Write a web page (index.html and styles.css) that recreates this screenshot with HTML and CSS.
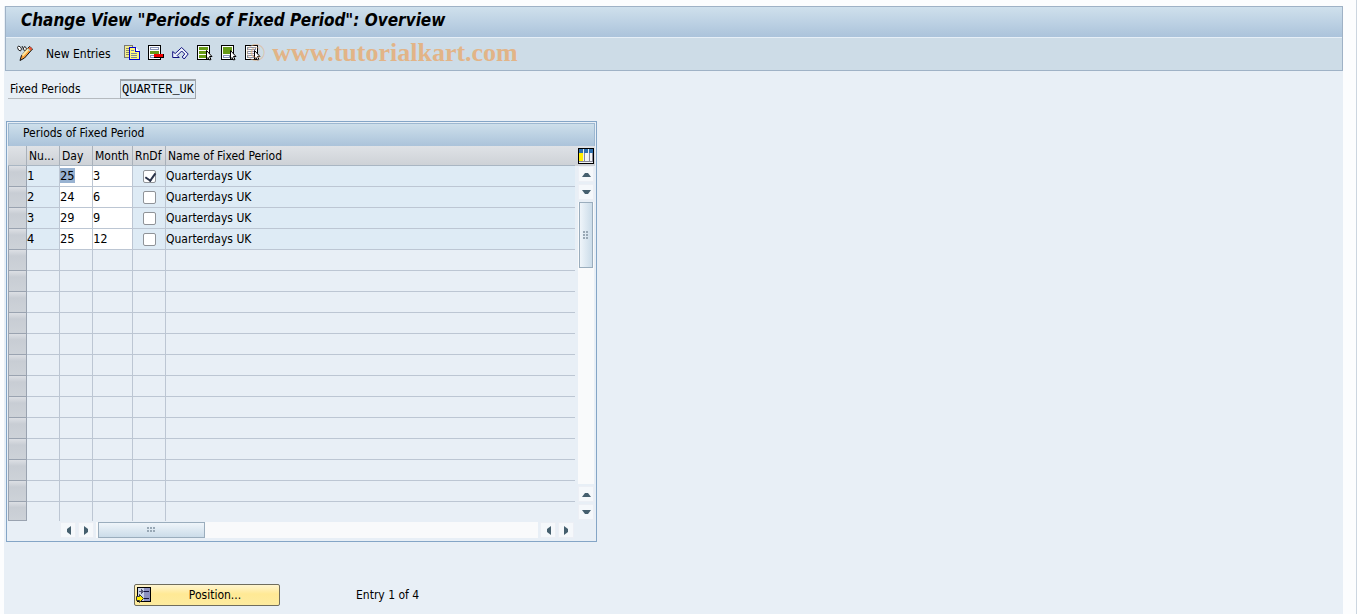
FILE: index.html
```html
<!DOCTYPE html>
<html lang="en">
<head>
<meta charset="utf-8">
<title>Change View "Periods of Fixed Period": Overview</title>
<link rel="stylesheet" href="styles.css">
</head>
<body>
<main class="screen">
  <header class="head">
    <h1 class="title">Change View "Periods of Fixed Period": Overview</h1>
    <div class="toolbar">
      <button class="tool" aria-label="Display/Change">
        <svg width="18" height="18" viewBox="0 0 18 18"><path d="M1.500 3.500l1-1.500 2 1 1 2-1 2-2-1zM6 2l1.500 3M7 5.500l1.500-3 1.500 1 .5 2-1.500 1z" fill="#fff" stroke="#222"/><path d="M13.500 2.500l3 2.500-8 9-4.500 2.500 1.500-5z" fill="#f9a13c" stroke="#111"/><path d="M6.500 11.500l6-6.500" stroke="#ffe9a0" stroke-width="2"/><path d="M13.500 3.500l2 2" stroke="#e8503a" stroke-width="2"/><path d="M12 5l2 2" stroke="#9ccaf0"/></svg>
      </button>
      <button class="tool tool-text">New Entries</button>
      <button class="tool" aria-label="Copy As">
        <svg width="16" height="16" viewBox="0 0 16 16" shape-rendering="crispEdges"><path d="M.5.5h8v12h-8z" fill="#f4ed8e" stroke="#777"/><path d="M2 3.500h3M2 5.500h3M2 7.500h3M2 9.500h3" stroke="#8a8a60"/><path d="M5.500 2.500h6l4 4v8h-10z" fill="#fff67c" stroke="#0000d0"/><path d="M11.500 2.500v4h4" fill="#fff" stroke="#0000d0"/><path d="M7 5.500h3M7 8.500h6M7 10.500h6M7 12.500h6" stroke="#7d88a0"/></svg>
      </button>
      <button class="tool" aria-label="Delete">
        <svg width="16" height="16" viewBox="0 0 16 16" shape-rendering="crispEdges"><path d="M.5.500h12v14h-12z" fill="#fff" stroke="#000"/><path d="M2.500 2.500h8v2h-8zM2.500 10.500h4v2h-4z" fill="#fff" stroke="#8793b8"/><path d="M2 6h9v3H2z" fill="#679b17"/><path d="M6 9h10v4H6z" fill="#000"/><path d="M6 9h9v3H6z" fill="#f00000"/></svg>
      </button>
      <button class="tool" aria-label="Undo Change">
        <svg width="17" height="16" viewBox="0 0 17 16"><path d="M.7 6.500v6h6.500l-2-2 4.500-4.500 3 3-2.500 3 2 2 4-5-6.500-6.500-6.500 6z" fill="#eef3fb" stroke="#111180"/></svg>
      </button>
      <button class="tool" aria-label="Select All">
        <svg width="16" height="16" viewBox="0 0 16 16" shape-rendering="crispEdges"><path d="M.5.500h12v14h-12z" fill="#fff" stroke="#000"/><path d="M2 2h9v3H2zM2 6h9v3H2zM2 10h8v3H2z" fill="#679b17"/><path d="M9.500 5.500l5.500 6h-2.500l1.500 3-1.500.500-1.500-2.500-1.500 1.500z" fill="#fff" stroke="#000" shape-rendering="auto"/></svg>
      </button>
      <button class="tool" aria-label="Select Block">
        <svg width="16" height="16" viewBox="0 0 16 16" shape-rendering="crispEdges"><path d="M.5.500h12v14h-12z" fill="#fff" stroke="#000"/><path d="M2 2h9v7H2z" fill="#679b17"/><path d="M2.500 10.500h6v2h-6z" fill="#fff" stroke="#8793b8"/><path d="M9.500 5.500l5.500 6h-2.500l1.500 3-1.500.500-1.500-2.500-1.500 1.500z" fill="#fff" stroke="#000" shape-rendering="auto"/></svg>
      </button>
      <button class="tool" aria-label="Deselect All">
        <svg width="16" height="16" viewBox="0 0 16 16" shape-rendering="crispEdges"><path d="M.5.500h12v14h-12z" fill="#fff" stroke="#000"/><path d="M2.500 2.500h8v2h-8zM2.500 6.500h8v2h-8zM2.500 10.500h6v2h-6z" fill="#fff" stroke="#8793a8"/><path d="M9.500 5.500l5.500 6h-2.500l1.500 3-1.500.500-1.500-2.500-1.500 1.500z" fill="#fff" stroke="#000" shape-rendering="auto"/></svg>
      </button>
    </div>
    <span class="watermark"><span class="mark">©</span> www.tutorialkart.com</span>
  </header>

  <div class="field">
    <label class="field-label" for="fixed">Fixed Periods</label>
    <input class="field-value" id="fixed" value="QUARTER_UK" readonly>
  </div>

  <section class="panel">
    <h2 class="panel-title">Periods of Fixed Period</h2>
    <div class="grid">
      <table class="periods">
        <colgroup><col class="c-sel"><col class="c-num"><col class="c-day"><col class="c-month"><col class="c-flag"><col></colgroup>
        <thead>
          <tr><th></th><th>Nu...</th><th>Day</th><th>Month</th><th>RnDf</th><th>Name of Fixed Period</th></tr>
        </thead>
        <tbody>
          <tr class="filled"><td><button class="pick" aria-label="Select row 1"></button></td><td class="num">1</td><td><input class="cell selected" aria-label="Day 1" value="25"></td><td><input class="cell" aria-label="Month 1" value="3"></td><td><input type="checkbox" class="flag" aria-label="RnDf 1" checked></td><td>Quarterdays UK</td></tr>
          <tr class="filled"><td><button class="pick" aria-label="Select row 2"></button></td><td class="num">2</td><td><input class="cell" aria-label="Day 2" value="24"></td><td><input class="cell" aria-label="Month 2" value="6"></td><td><input type="checkbox" class="flag" aria-label="RnDf 2"></td><td>Quarterdays UK</td></tr>
          <tr class="filled"><td><button class="pick" aria-label="Select row 3"></button></td><td class="num">3</td><td><input class="cell" aria-label="Day 3" value="29"></td><td><input class="cell" aria-label="Month 3" value="9"></td><td><input type="checkbox" class="flag" aria-label="RnDf 3"></td><td>Quarterdays UK</td></tr>
          <tr class="filled"><td><button class="pick" aria-label="Select row 4"></button></td><td class="num">4</td><td><input class="cell" aria-label="Day 4" value="25"></td><td><input class="cell" aria-label="Month 4" value="12"></td><td><input type="checkbox" class="flag" aria-label="RnDf 4"></td><td>Quarterdays UK</td></tr>
          <tr><td><button class="pick" aria-label="Select row 5"></button></td><td></td><td></td><td></td><td></td><td></td></tr>
          <tr><td><button class="pick" aria-label="Select row 6"></button></td><td></td><td></td><td></td><td></td><td></td></tr>
          <tr><td><button class="pick" aria-label="Select row 7"></button></td><td></td><td></td><td></td><td></td><td></td></tr>
          <tr><td><button class="pick" aria-label="Select row 8"></button></td><td></td><td></td><td></td><td></td><td></td></tr>
          <tr><td><button class="pick" aria-label="Select row 9"></button></td><td></td><td></td><td></td><td></td><td></td></tr>
          <tr><td><button class="pick" aria-label="Select row 10"></button></td><td></td><td></td><td></td><td></td><td></td></tr>
          <tr><td><button class="pick" aria-label="Select row 11"></button></td><td></td><td></td><td></td><td></td><td></td></tr>
          <tr><td><button class="pick" aria-label="Select row 12"></button></td><td></td><td></td><td></td><td></td><td></td></tr>
          <tr><td><button class="pick" aria-label="Select row 13"></button></td><td></td><td></td><td></td><td></td><td></td></tr>
          <tr><td><button class="pick" aria-label="Select row 14"></button></td><td></td><td></td><td></td><td></td><td></td></tr>
          <tr><td><button class="pick" aria-label="Select row 15"></button></td><td></td><td></td><td></td><td></td><td></td></tr>
          <tr><td><button class="pick" aria-label="Select row 16"></button></td><td></td><td></td><td></td><td></td><td></td></tr>
          <tr class="last"><td><button class="pick" aria-label="Select row 17"></button></td><td></td><td></td><td></td><td></td><td></td></tr>
        </tbody>
      </table>
      <div class="side">
        <button class="config" aria-label="Table settings">
          <svg width="16" height="16" viewBox="0 0 16 16" shape-rendering="crispEdges"><path d="M0 0h16v16H0z" fill="#000"/><path d="M1 1h14v14H1z" fill="#f2f4f6"/><path d="M1 1h14v4H1z" fill="#2d6fae"/><path d="M1 5h4v8H1z" fill="#ffee00"/><path d="M5.500 1v13M10.500 1v13" stroke="#e8eef4"/><path d="M6.500 5v9M11.500 5v9M14.500 5v9M1 13.500h13" stroke="#889"/></svg>
        </button>
        <button class="arrow" aria-label="Scroll up"><svg width="9" height="5" viewBox="0 0 9 5"><path d="M0 5h9L6 1H3z" fill="#455f6e"/></svg></button>
        <button class="arrow" aria-label="Scroll down"><svg width="9" height="5" viewBox="0 0 9 5"><path d="M0 0h9L6 4H3z" fill="#455f6e"/></svg></button>
        <div class="track track-v"><div class="thumb thumb-v"><i class="grip grip-v"></i></div></div>
        <button class="arrow" aria-label="Page up"><svg width="9" height="5" viewBox="0 0 9 5"><path d="M0 5h9L6 1H3z" fill="#455f6e"/></svg></button>
        <button class="arrow" aria-label="Page down"><svg width="9" height="5" viewBox="0 0 9 5"><path d="M0 0h9L6 4H3z" fill="#455f6e"/></svg></button>
      </div>
    </div>
    <div class="bottom">
      <button class="arrow" aria-label="Scroll left"><svg width="5" height="9" viewBox="0 0 5 9"><path d="M5 0v9L1 6V3z" fill="#455f6e"/></svg></button>
      <button class="arrow" aria-label="Scroll right"><svg width="5" height="9" viewBox="0 0 5 9"><path d="M0 0v9l4-3V3z" fill="#455f6e"/></svg></button>
      <div class="track track-h"><div class="thumb thumb-h"><i class="grip grip-h"></i></div></div>
      <button class="arrow" aria-label="Page left"><svg width="5" height="9" viewBox="0 0 5 9"><path d="M5 0v9L1 6V3z" fill="#455f6e"/></svg></button>
      <button class="arrow" aria-label="Page right"><svg width="5" height="9" viewBox="0 0 5 9"><path d="M0 0v9l4-3V3z" fill="#455f6e"/></svg></button>
    </div>
  </section>

  <footer class="foot">
    <button class="position">
      <svg width="16" height="16" viewBox="0 0 16 16" shape-rendering="crispEdges"><path d="M1.500.5h13v14h-13z" fill="#c9d3e8" stroke="#000"/><path d="M8 1h6v13H8z" fill="#8c90c0"/><path d="M8 4h5v1H8zM8 11h5v1H8z" fill="#15153c"/><path d="M3 4.500h4M5 2.500l2 2-2 2" fill="none" stroke="#557"/><path d="M.5 9.500h3v-2l4 4-4 4v-2h-3z" fill="#ffee00" stroke="#333" shape-rendering="auto"/></svg>
      <span class="position-text">Position...</span>
    </button>
    <span>Entry 1 of 4</span>
  </footer>
</main>
</body>
</html>
```
FILE: styles.css
```css
* { box-sizing: border-box; }
html { height: 100%; }
body {
  margin: 0;
  min-height: 100%;
  display: flex;
  padding: 6px 13px 0 4px;
  background: #fcfdfe;
  border-right: 1px solid #ccd6e0;
  font: 12px/16px "DejaVu Sans Condensed", "DejaVu Sans", sans-serif;
  color: #000;
}
button, input { font: inherit; color: inherit; margin: 0; padding: 0; border: 0; border-radius: 0; background: none; }
svg { display: block; }

.screen { flex: 1; min-width: 0; background: #e8eff6; }

.head { position: relative; margin-left: 1px; border: 1px solid #9fb2c6; }
.title {
  margin: 0;
  height: 31px;
  padding: 3px 15px 0;
  border-bottom: 1px solid #e6eff7;
  background: linear-gradient(#cfe0ec, #abc3db);
  font: italic bold 17px/20px "DejaVu Sans Condensed", "DejaVu Sans", sans-serif;
}
.toolbar { display: flex; align-items: center; gap: 8px; height: 32px; padding: 0 10px 3px; background: #cddce7; }
.tool-text { margin: 0 5px 0 4px; padding-top: 2px; }
.watermark {
  position: absolute;
  left: 240px;
  bottom: 2px;
  font: bold 26px/30px "Liberation Serif", serif;
  color: #e2b487;
  pointer-events: none;
}
.mark { font-weight: normal; opacity: .6; }

.field { display: flex; align-items: flex-end; margin: 8px 0 0 4px; }
.field-label { width: 112px; padding: 0 2px; border-bottom: 1px solid #b5babf; line-height: 17px; }
.field-value {
  width: 76px;
  height: 20px;
  padding: 0 1px;
  border: 1px solid #a0a6ac;
  border-top-width: 2px;
  background: #dfebf5;
  font-family: "Liberation Mono", monospace;
}

.panel { width: 591px; max-width: 100%; margin: 22px 0 0 2px; padding: 1px; border: 1px solid #84a5c6; }
.panel-title {
  margin: 0;
  padding: 0 14px 4px;
  border: 1px solid #9db8d1;
  border-bottom: 0;
  background: linear-gradient(#cddfeb, #abc3da);
  font-size: 12px;
  font-weight: normal;
  line-height: 18px;
}
.grid { display: flex; background: linear-gradient(#dfe2e6, #cdd1d6) no-repeat 0 0 / 100% 20px; }
.periods { flex: 1; min-width: 0; table-layout: fixed; border-collapse: separate; border-spacing: 0; }
.c-sel { width: 19px; }
.c-num, .c-day, .c-flag { width: 33px; }
.c-month { width: 40px; }
.periods th, .periods td { height: 21px; padding: 0; text-align: left; white-space: nowrap; }
.periods th { height: 20px; padding-left: 2px; border-right: 1px solid #a9b1ba; border-bottom: 1px solid #a9b6c3; font-weight: normal; }
.periods td { border-right: 1px solid #bcc6d3; border-bottom: 1px solid #bcc6d3; }
.periods th:last-child, .periods td:last-child { border-right: 0; }
.periods .last td { height: 19px; border-bottom: 0; }
.filled td { background: #deebf5; }
.periods td:first-child { border: 0; background: none; }
.num, .cell { font-family: "DejaVu Sans Mono", monospace; font-size: 12px; }
.pick { display: block; width: 19px; height: 21px; border: 1px solid #9aa3b0; border-width: 0 1px 1px; background: linear-gradient(#dcdfe4, #c8cdd4 30%, #cdd2d8); }
.last .pick { height: 19px; }
.cell { display: block; width: 100%; height: 20px; background: #fff; }
.selected { background: linear-gradient(#98b2d1, #98b2d1) no-repeat 0 2px / 15px 15px #fff; }
.flag { appearance: none; display: block; width: 13px; height: 13px; margin: 0 auto; border: 1px solid #8f9398; border-radius: 2px; background: #fff; }
.flag:checked::before { content: ""; display: block; width: 5px; height: 8px; margin: 0 0 0 3px; border: solid #283148; border-width: 0 2px 2px 0; transform: rotate(35deg); }

.side { display: flex; flex-direction: column; align-items: center; gap: 2px; width: 20px; padding: 2px 0 1px 2px; background: linear-gradient(#dfe2e6, #cdd1d6) no-repeat 0 0 / 100% 20px; }
.arrow { display: grid; place-items: center; flex: none; width: 16px; height: 16px; background: #f5f8fb; border: 1px solid #eceff5; }
.track { background: #f9fafb; flex: 1; }
.track-v { width: 16px; }
.thumb { display: grid; place-items: center; border: 1px solid #9aadbd; }
.thumb-v { width: 14px; height: 66px; margin: 0 auto; background: linear-gradient(90deg, #eff5fa, #cbdce9); }
.thumb-h { width: 107px; height: 16px; margin-left: 2px; background: linear-gradient(#eff5fa, #cbdce9); }
.grip { background: radial-gradient(circle at 1px 1px, #98a8b5 1px, transparent 1px) 0 0 / 3px 3px; }
.grip-v { width: 6px; height: 9px; }
.grip-h { width: 9px; height: 6px; }
.bottom { display: flex; align-items: center; gap: 2px; padding: 1px 21px 2px 52px; }
.track-h { height: 16px; }

.foot { display: flex; align-items: center; gap: 76px; margin: 42px 0 8px 130px; }
.position {
  display: flex;
  align-items: center;
  width: 146px;
  height: 22px;
  padding: 0 1px;
  border: 1px solid #6f6d5d;
  border-radius: 2px;
  background: linear-gradient(#fff5cf, #ffe995 45%, #fdeb9f);
}
.position-text { flex: 1; text-align: center; }
```
